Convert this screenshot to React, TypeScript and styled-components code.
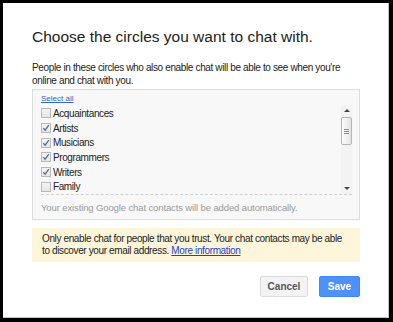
import React from "react";
import styled, { createGlobalStyle } from "styled-components";

const GlobalStyle = createGlobalStyle`
  html, body {
    margin: 0;
    padding: 0;
    background: #fff;
  }
  body {
    font-family: "Liberation Sans", Arial, sans-serif;
  }
`;

const circles = [
  { name: "Acquaintances", checked: false },
  { name: "Artists", checked: true },
  { name: "Musicians", checked: true },
  { name: "Programmers", checked: true },
  { name: "Writers", checked: true },
  { name: "Family", checked: false },
];

const Frame = styled.div`
  box-sizing: border-box;
  width: 393px;
  height: 322px;
  border: 3px solid #000;
  border-right-width: 4px;
  border-bottom-width: 4px;
  box-shadow: inset -1px -1px 0 #c4c4c4;
  background: #fff;
  padding: 24px 29px 0 29px;
  display: flex;
  flex-direction: column;
`;

const Title = styled.h1`
  margin: 0;
  font-size: 15.5px;
  line-height: 20px;
  font-weight: normal;
  color: #222;
`;

const Intro = styled.p`
  margin: 14px 0 0;
  font-size: 10px;
  letter-spacing: -0.36px;
  line-height: 13px;
  color: #222;
  white-space: nowrap;
`;

const ListBox = styled.div`
  margin-top: 2px;
  border: 1px solid #dcdcdc;
  background: #f8f8f8;
  padding: 3px 7px 5px 8px;
`;

const SelectAll = styled.a`
  display: block;
  font-size: 8px;
  line-height: 12px;
  color: #3366cc;
  text-decoration: underline;
  cursor: pointer;
`;

const ScrollArea = styled.div`
  display: flex;
  height: 89px;
  border-bottom: 1px dashed #cfcfcf;
`;

const Rows = styled.div`
  flex: 1;
  overflow: hidden;
  padding-top: 1px;
`;

const Row = styled.label`
  display: flex;
  align-items: center;
  height: 14.7px;
  font-size: 10px;
  letter-spacing: -0.4px;
  color: #222;
`;

const Box = styled.span<{ $checked: boolean }>`
  box-sizing: border-box;
  width: 10px;
  height: 10px;
  margin-right: 2px;
  border: 1px solid #b9b9b9;
  background: linear-gradient(#f4f4f4, #e6e6e6);
  display: flex;
  align-items: center;
  justify-content: center;
`;

const Track = styled.div`
  width: 11px;
  display: flex;
  flex-direction: column;
  background: #f3f3f3;
`;

const Arrow = styled.div<{ $down?: boolean }>`
  height: 11px;
  display: flex;
  align-items: center;
  justify-content: center;

  &::before {
    content: "";
    width: 0;
    height: 0;
    border-left: 3px solid transparent;
    border-right: 3px solid transparent;
    ${(p) => (p.$down ? "border-top: 3px solid #444;" : "border-bottom: 3px solid #444;")}
  }
`;

const Thumb = styled.div`
  box-sizing: border-box;
  margin: 1px 0 0;
  height: 28px;
  border: 1px solid #b5b5b5;
  border-radius: 2px;
  background: linear-gradient(90deg, #fdfdfd, #e4e4e4);
  display: flex;
  flex-direction: column;
  align-items: center;
  justify-content: center;
  gap: 1px;
`;

const Grip = styled.span`
  width: 5px;
  height: 1px;
  background: #8a8a8a;
`;

const Spacer = styled.div`
  flex: 1;
`;

const Note = styled.div`
  padding-top: 6px;
  font-size: 9.5px;
  letter-spacing: -0.12px;
  line-height: 13px;
  color: #999;
`;

const Warning = styled.div`
  margin-top: 8px;
  padding: 5px 10px;
  background: #fdf6da;
  font-size: 10px;
  letter-spacing: -0.37px;
  line-height: 12px;
  color: #222;
  white-space: nowrap;
`;

const Link = styled.a`
  color: #1f3fd0;
  text-decoration: underline;
  cursor: pointer;
`;

const Actions = styled.div`
  margin-top: 14px;
  display: flex;
  justify-content: flex-end;
  gap: 11px;
`;

const Button = styled.button<{ $primary?: boolean }>`
  box-sizing: border-box;
  height: 21px;
  width: ${(p) => (p.$primary ? "41px" : "48px")};
  padding: 0;
  border-radius: 2px;
  font-family: "Liberation Sans", Arial, sans-serif;
  font-size: 10px;
  font-weight: bold;
  border: 1px solid ${(p) => (p.$primary ? "#3f88f8" : "#dcdcdc")};
  background: ${(p) => (p.$primary ? "#4d90fe" : "#f3f3f3")};
  color: ${(p) => (p.$primary ? "#fff" : "#555")};
`;

const Check = () => (
  <svg width="8" height="8" viewBox="0 0 8 8">
    <path d="M1.3 4.2 L3.1 6.2 L6.8 1.2" fill="none" stroke="#56688a" strokeWidth="1.2" />
  </svg>
);

const App = () => {
  return (
    <>
      <GlobalStyle />
      <Frame>
        <Title>Choose the circles you want to chat with.</Title>
        <Intro>
          People in these circles who also enable chat will be able to see when you're
          <br />
          online and chat with you.
        </Intro>
        <ListBox>
          <SelectAll>Select all</SelectAll>
          <ScrollArea>
            <Rows>
              {circles.map((c) => (
                <Row key={c.name}>
                  <Box $checked={c.checked}>{c.checked && <Check />}</Box>
                  {c.name}
                </Row>
              ))}
            </Rows>
            <Track>
              <Arrow />
              <Thumb>
                <Grip />
                <Grip />
                <Grip />
              </Thumb>
              <Spacer />
              <Arrow $down />
            </Track>
          </ScrollArea>
          <Note>Your existing Google chat contacts will be added automatically.</Note>
        </ListBox>
        <Warning>
          Only enable chat for people that you trust. Your chat contacts may be able
          <br />
          to discover your email address. <Link>More information</Link>
        </Warning>
        <Actions>
          <Button>Cancel</Button>
          <Button $primary>Save</Button>
        </Actions>
      </Frame>
    </>
  );
};

export default App;
